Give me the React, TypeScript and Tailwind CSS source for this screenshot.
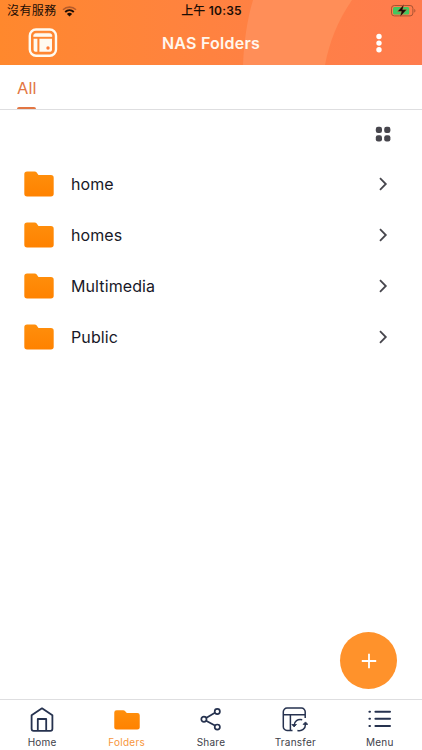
import React from "react";

type IconProps = { className?: string };

function AppLogo() {
  return (
    <svg width="30" height="30" viewBox="0 0 30 30" fill="none">
      <rect x="1.8" y="1.5" width="26.2" height="26.2" rx="6.2" stroke="#fffaf0" strokeWidth="2.4" />
      <path d="M5.6 8.5V8a2.6 2.6 0 0 1 2.6-2.6h13.2A2.6 2.6 0 0 1 24 8v.5z" fill="#fffaf0" stroke="#fffaf0" strokeWidth=".6" />
      <path d="M5.6 10.8h3.8v13H8.2a2.6 2.6 0 0 1-2.6-2.6z" fill="#fffaf0" />
      <path d="M11.4 10.8H24v10.4a2.6 2.6 0 0 1-2.6 2.6h-10z" fill="#fffaf0" />
      <circle cx="20" cy="20" r="1.7" fill="#ff7a35" />
    </svg>
  );
}

function Wifi() {
  return (
    <svg width="15" height="11" viewBox="0 0 15 11" fill="none">
      <path d="M1 3.8C4.7.2 10.3.2 14 3.8" stroke="#b65c2b" strokeWidth="1.6" />
      <path d="M3.2 6C5.7 3.6 9.3 3.6 11.8 6" stroke="#1b0d05" strokeWidth="1.9" />
      <path d="M4.9 7.9c1.5-1.4 3.7-1.4 5.2 0L7.5 10.6z" fill="#1b0d05" />
    </svg>
  );
}

function Battery() {
  return (
    <svg width="26" height="14" viewBox="0 0 26 14" fill="none">
      <rect x="1.5" y="1.5" width="21.4" height="10.4" rx="2.8" stroke="#a85332" />
      <rect x="3" y="3" width="16.2" height="7.4" rx="1.5" fill="#43c75f" />
      <path d="M24.3 4.9c.8.4 1.1 1 1.1 1.8s-.3 1.4-1.1 1.8z" fill="#a85332" />
      <path d="M14.1.2 7.3 7.5h4.1L9.9 13l7-7.4h-4.2z" fill="#170c06" stroke="#ff8250" strokeWidth=".4" />
    </svg>
  );
}

function Folder({ className }: IconProps) {
  return (
    <svg className={className} viewBox="0 0 29 26" preserveAspectRatio="none">
      <defs>
        <linearGradient id="folderFill" x1="0" y1="0" x2="0" y2="1">
          <stop stopColor="#ff8f0c" />
          <stop offset="1" stopColor="#ff8200" />
        </linearGradient>
      </defs>
      <path
        d="M3 .4h7.2c.9 0 1.6.3 2.1 1l1.3 2c.3.4.6.6 1.1.6H26a2.7 2.7 0 0 1 2.7 2.7v16.1a2.7 2.7 0 0 1-2.7 2.7H3A2.7 2.7 0 0 1 .3 22.8V3.1A2.7 2.7 0 0 1 3 .4z"
        fill="url(#folderFill)"
      />
    </svg>
  );
}

function HomeIcon() {
  return (
    <svg width="24" height="26" viewBox="0 0 24 26" fill="none" stroke="#26324f" strokeWidth="1.8" strokeLinejoin="round">
      <path d="M1.6 8.2 12 1.3l10.4 6.9v13.5a2.1 2.1 0 0 1-2.1 2.1H3.7a2.1 2.1 0 0 1-2.1-2.1z" />
      <path d="M7.8 23.5V12h8.4v11.5" />
    </svg>
  );
}

function ShareIcon() {
  return (
    <svg width="22" height="24" viewBox="0 0 22 24" fill="none" stroke="#26324f" strokeWidth="1.7">
      <path d="m6.1 9.9 8.8-5.1M6.1 12.7l8.8 4.9" />
      <circle cx="3.9" cy="11.3" r="2.6" />
      <circle cx="17.3" cy="3.5" r="2.6" />
      <circle cx="17.3" cy="19.1" r="2.6" />
    </svg>
  );
}

function TransferIcon() {
  return (
    <svg width="26" height="26" viewBox="0 0 26 26" fill="none" stroke="#26324f" strokeWidth="1.5">
      <path d="M10.5 23.4H5a3.7 3.7 0 0 1-3.7-3.7V4.8A3.7 3.7 0 0 1 5 1.1h14.5a3.7 3.7 0 0 1 3.7 3.7v6.3M1.3 7.7h21.9M8.4 7.7v15.7" />
      <path d="M20.2 12.7c-4.4-1-8 1.3-8.1 5.8M15.4 23.4c4.6 1 8.1-1.4 8.1-6.4" />
      <path d="m9.8 17.5 2.3 2.4 2.4-2.4zM21.1 17.4l2.4-2.5 2.3 2.5z" fill="#26324f" strokeWidth=".8" />
    </svg>
  );
}

function MenuIcon() {
  return (
    <svg width="24" height="20" viewBox="0 0 24 20" fill="none" stroke="#26324f" strokeWidth="2" strokeLinecap="round">
      <path d="M7.4 1.8h14.6M7.4 8.8h14.6M7.4 15.9h14.6M1.4 1.8H2M1.4 8.8H2M1.4 15.9H2" />
    </svg>
  );
}

function GridIcon() {
  return (
    <svg width="16" height="16" viewBox="0 0 16 16" fill="#47464d">
      <rect x=".8" y=".8" width="6.2" height="6.2" rx="2.2" />
      <rect x="9.2" y=".8" width="6.2" height="6.2" rx="2.2" />
      <rect x=".8" y="9.2" width="6.2" height="6.2" rx="2.2" />
      <rect x="9.2" y="9.2" width="6.2" height="6.2" rx="2.2" />
    </svg>
  );
}

const folders = ["home", "homes", "Multimedia", "Public"];

const tabs = [
  { label: "Home", icon: <HomeIcon /> },
  { label: "Folders", icon: <Folder className="h-5 w-[26px]" />, active: true },
  { label: "Share", icon: <ShareIcon /> },
  { label: "Transfer", icon: <TransferIcon /> },
  { label: "Menu", icon: <MenuIcon /> },
];

export default function App() {
  return (
    <div className="relative flex h-[750px] w-[422px] flex-col overflow-hidden bg-white font-['Inter','Noto_Sans_CJK_TC',sans-serif] text-[#181827]">
      <header className="relative h-[65px] shrink-0 bg-linear-to-r from-[#ff882d] via-[#ff8240] to-[#ff7c4e]">
        <svg className="absolute inset-0" width="422" height="65" viewBox="0 0 422 65">
          <path d="M253 0h99c-14 20-23 43-27 65h-82c1-23 4-45 10-65z" fill="#ff8e58" />
        </svg>
        <div className="relative grid h-[22px] grid-cols-3 items-center pl-[7px] pr-[6px] text-[#1b0d05]">
          <div className="flex items-center gap-[5px]">
            <span className="text-[12px] leading-[22px] tracking-[0.4px]">沒有服務</span>
            <Wifi />
          </div>
          <span className="text-center text-[12px] font-semibold leading-[22px] tracking-[0.2px]">
            <span className="font-medium">上午</span> 10:35
          </span>
          <div className="flex justify-end">
            <Battery />
          </div>
        </div>
        <div className="relative grid h-[42px] grid-cols-[72px_1fr_72px] items-center text-[#fff7ed]">
          <div className="flex pl-7">
            <AppLogo />
          </div>
          <h1 className="text-center text-[16px] font-semibold tracking-[0.25px]">NAS Folders</h1>
          <div className="flex pl-[25px]">
            <svg width="8" height="20" viewBox="0 0 8 20" fill="white">
              <circle cx="4" cy="3.5" r="2.7" />
              <circle cx="4" cy="10.1" r="2.7" />
              <circle cx="4" cy="16.7" r="2.7" />
            </svg>
          </div>
        </div>
      </header>

      <nav className="flex h-[45px] shrink-0 border-b border-[#dedee0] pl-[17px]">
        <div className="flex h-11 w-[19px] flex-col justify-between text-[#e27643]">
          <span className="pt-[11px] text-[16.5px] leading-6">All</span>
          <span className="h-[2px] w-full rounded-t-full bg-[#e27643]" />
        </div>
      </nav>

      <main className="flex-1">
        <div className="flex h-12 items-center justify-end pr-[31px]">
          <GridIcon />
        </div>
        <ul>
          {folders.map((name) => (
            <li key={name} className="flex h-[51px] items-center pl-6 pr-[34px]">
              <Folder className="h-[26px] w-[30px]" />
              <span className="ml-[17px] flex-1 text-[16px] leading-6 tracking-[0.1px]">{name}</span>
              <svg width="10" height="14" viewBox="0 0 10 14" fill="none" stroke="#47464d" strokeWidth="1.8">
                <path d="m2 1.2 5.8 5.8L2 12.8" />
              </svg>
            </li>
          ))}
        </ul>
      </main>

      <button className="absolute right-[25px] bottom-[61px] flex size-[57px] items-center justify-center rounded-full bg-[#ff922b]">
        <svg width="16" height="16" viewBox="0 0 16 16" stroke="white" strokeWidth="1.8">
          <path d="M8 .8v14.4M.8 8h14.4" />
        </svg>
      </button>

      <footer className="grid h-[51px] shrink-0 grid-cols-5 border-t border-[#dedee0]">
        {tabs.map((tab) => (
          <div key={tab.label} className={tab.active ? "flex flex-col items-center text-[#f7963c]" : "flex flex-col items-center text-[#414149]"}>
            <div className="mt-[6px] flex h-[27px] items-center">{tab.icon}</div>
            <span className="mt-[2px] text-[10px] leading-[14px] tracking-[0.25px]">{tab.label}</span>
          </div>
        ))}
      </footer>
    </div>
  );
}
